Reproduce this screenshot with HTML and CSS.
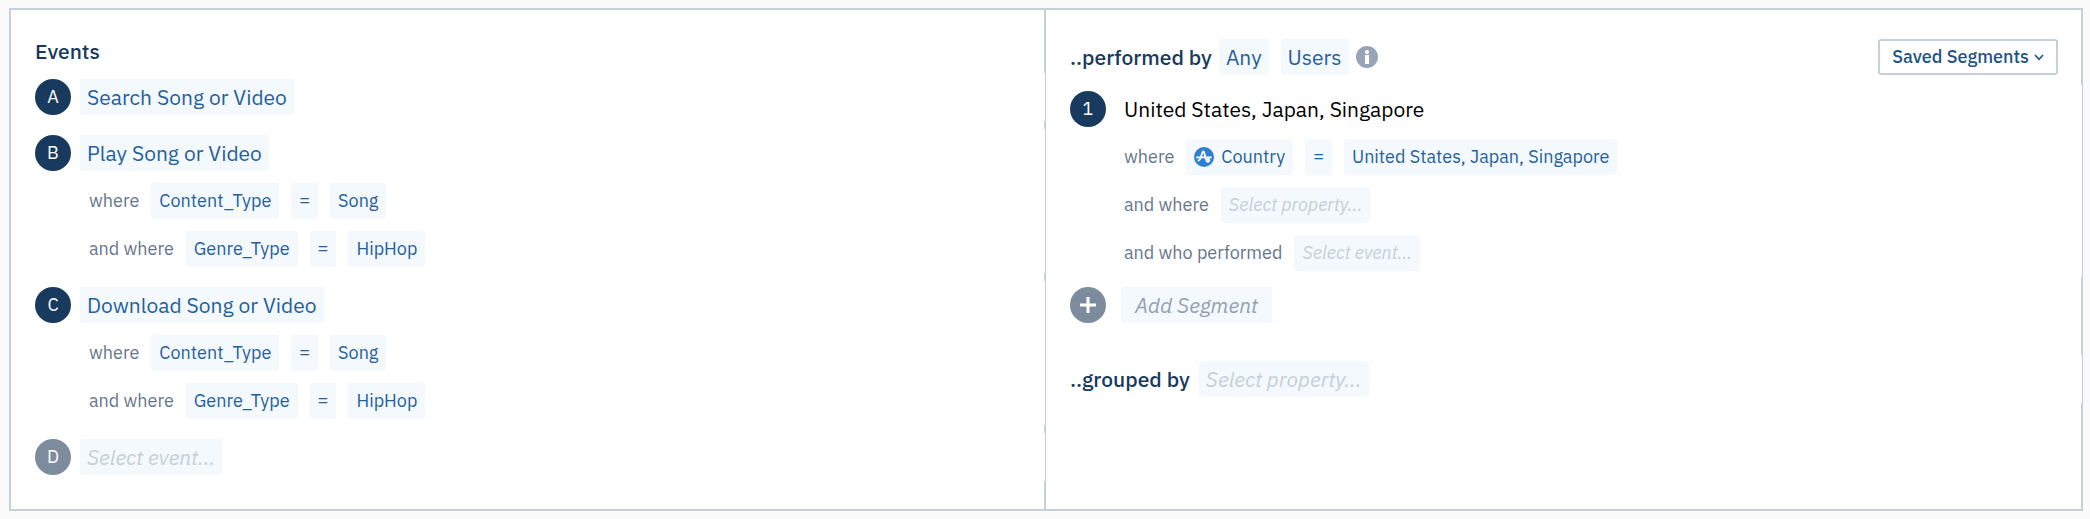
FILE: index.html
```
<!DOCTYPE html>
<html lang="en">
	<head>
		<meta charset="utf-8" />
		<title>Events</title>
		<link rel="stylesheet" href="styles.css">
	</head>
	<body>
		<main class="query">
			<section class="panel events">
				<h2 class="title">Events</h2>
				<div class="block">
					<div class="row">
						<span class="badge">A</span>
						<button class="chip large">Search Song or Video</button>
					</div>
				</div>
				<div class="block">
					<div class="row">
						<span class="badge">B</span>
						<button class="chip large">Play Song or Video</button>
					</div>
					<div class="row filter">
						<span class="label">where</span>
						<button class="chip">Content_Type</button>
						<button class="chip">=</button>
						<button class="chip">Song</button>
					</div>
					<div class="row filter">
						<span class="label">and where</span>
						<button class="chip">Genre_Type</button>
						<button class="chip">=</button>
						<button class="chip">HipHop</button>
					</div>
				</div>
				<div class="block">
					<div class="row">
						<span class="badge">C</span>
						<button class="chip large">Download Song or Video</button>
					</div>
					<div class="row filter">
						<span class="label">where</span>
						<button class="chip">Content_Type</button>
						<button class="chip">=</button>
						<button class="chip">Song</button>
					</div>
					<div class="row filter">
						<span class="label">and where</span>
						<button class="chip">Genre_Type</button>
						<button class="chip">=</button>
						<button class="chip">HipHop</button>
					</div>
				</div>
				<div class="block">
					<div class="row">
						<span class="badge muted">D</span>
						<button class="chip large empty">Select event...</button>
					</div>
				</div>
			</section>

			<section class="panel segments">
				<div class="head">
					<h2 class="title">..performed by</h2>
					<div class="who">
						<button class="chip large">Any</button>
						<button class="chip large">Users</button>
					</div>
					<svg class="info" viewBox="0 0 22 22" role="img" aria-label="Info">
						<circle cx="11" cy="11" r="11" fill="#98a4b5"/>
						<circle cx="11" cy="6" r="2" fill="#fff"/>
						<path d="M9 9H13V18H9Z" fill="#fff"/>
					</svg>
					<button class="saved">
						Saved Segments
						<svg class="caret" viewBox="0 0 10 7"><path d="M1 1L5 5.4L9 1" fill="none" stroke="#1e5385" stroke-width="1.6"/></svg>
					</button>
				</div>
				<div class="block">
					<div class="row">
						<span class="badge">1</span>
						<span class="name">United States, Japan, Singapore</span>
					</div>
					<div class="row filter">
						<span class="label">where</span>
						<button class="chip property">
							<svg class="logo" viewBox="0 0 20 20">
								<circle cx="10" cy="10" r="10" fill="#2f7fd1"/>
								<path d="M3 10.400H17M4.500 13.500C7 13.500 7.800 4.500 9.300 4.500C11 4.500 11.400 14.800 13.500 14.800C15 14.800 15.800 13.400 15.200 12.600C14.800 12 14 12 13.500 12.600" fill="none" stroke="#fff" stroke-width="1.8" stroke-linecap="round" stroke-linejoin="round"/>
							</svg>
							Country
						</button>
						<button class="chip">=</button>
						<button class="chip">United States, Japan, Singapore</button>
					</div>
					<div class="row filter">
						<span class="label">and where</span>
						<button class="chip empty">Select property...</button>
					</div>
					<div class="row filter">
						<span class="label">and who performed</span>
						<button class="chip empty">Select event...</button>
					</div>
				</div>
				<div class="add">
					<button class="badge muted" aria-label="Add">
						<svg class="plus" viewBox="0 0 16 16"><path d="M8 0V16M0 8H16" stroke="#fff" stroke-width="3"/></svg>
					</button>
					<button class="chip large add-chip">Add Segment</button>
				</div>
				<div class="row grouped">
					<h2 class="title">..grouped by</h2>
					<button class="chip large empty">Select property...</button>
				</div>
			</section>
		</main>
	</body>
</html>
```
FILE: styles.css
```
*{
	margin: 0;
	padding: 0;
	box-sizing: border-box;
}
body{
	padding: 8px 7px 8px 9px;
	background: #fafafa;
	font-family: "IBM Plex Sans", Roboto, sans-serif;
	font-size: 18px;
	line-height: 24px;
	color: #000;
}
button{
	border: 0;
	font: inherit;
	white-space: nowrap;
	cursor: pointer;
}
.query{
	display: grid;
	grid-template-columns: 1fr 1fr;
	border-top: 2px solid #c5d0da;
	border-bottom: 2px solid #c5d0da;
	background: #fff;
}
.panel{
	border-right: 2px solid #c5d0da;
}
.events{
	padding: 28px 0 28px 24px;
	border-left: 2px solid #c5d0da;
}
.segments{
	padding: 23px 0 28px 24px;
}
.title{
	font-size: 21px;
	font-weight: 500;
	line-height: 26px;
	color: #173a5e;
}
.events .title{
	margin-bottom: 9px;
}
/* rows run over the inner half of the panel border */
.block, .grouped{
	margin-right: -1px;
	background: #fff;
}
.events .block + .block{
	margin-top: 8px;
}
.row{
	display: flex;
	align-items: center;
	height: 48px;
}
.badge{
	display: flex;
	align-items: center;
	justify-content: center;
	width: 36px;
	height: 36px;
	margin-right: 9px;
	border-radius: 50%;
	background: #173a5e;
	color: #fff;
}
.muted{
	background: #7d8c9d;
}
.chip{
	height: 36px;
	padding: 0 8px;
	border-radius: 3px;
	background: #f4f9fe;
	color: #25609c;
}
.large{
	padding: 0 7px;
	font-size: 21px;
}
.empty{
	color: #c6ced7;
	font-style: italic;
}
.filter{
	gap: 12px;
	padding-left: 54px;
}
.label{
	color: #67768a;
}
.head{
	display: flex;
	align-items: center;
	gap: 7px;
	height: 52px;
	padding: 0 23px 4px 0;
}
.who{
	display: flex;
	gap: 12px;
}
.info{
	width: 22px;
	height: 22px;
}
.saved{
	display: flex;
	align-items: center;
	gap: 5px;
	height: 36px;
	margin-left: auto;
	padding: 0 12px;
	border: 2px solid #c5d0da;
	border-radius: 3px;
	background: #fff;
	color: #1e5385;
	font-weight: 500;
}
.caret{
	width: 10px;
	height: 7px;
}
.name{
	margin-left: 9px;
	font-size: 21px;
}
.property{
	display: flex;
	align-items: center;
	gap: 7px;
}
.logo{
	width: 20px;
	height: 20px;
}
.add{
	display: flex;
	gap: 6px;
	padding: 10px 0 32px;
}
.plus{
	width: 16px;
	height: 16px;
}
.add-chip{
	padding: 0 14px;
	color: #93a0b1;
	font-style: italic;
}
.grouped{
	gap: 9px;
}
```
